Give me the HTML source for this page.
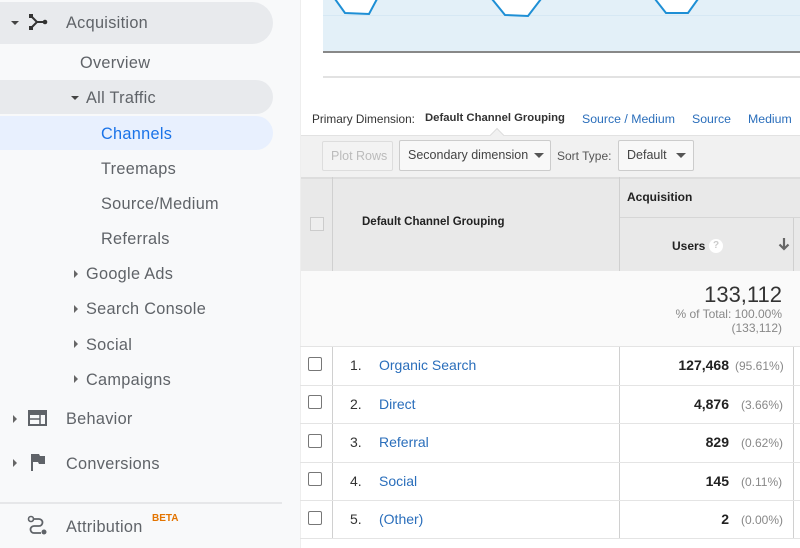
<!DOCTYPE html>
<html><head><meta charset="utf-8"><style>
*{margin:0;padding:0;box-sizing:border-box}
body{width:800px;height:548px;overflow:hidden;background:#fff;font-family:"Liberation Sans",Arial,sans-serif;position:relative}
.a{position:absolute;white-space:nowrap}
#side{position:absolute;left:0;top:0;width:300px;height:548px;background:#f8f9fa}
.nav{position:absolute;font-size:16.3px;color:#5f6368;line-height:20px;letter-spacing:0.3px}
.tri-d{position:absolute;width:0;height:0;border-left:4px solid transparent;border-right:4px solid transparent;border-top:4px solid #444}
.tri-r{position:absolute;width:0;height:0;border-top:4px solid transparent;border-bottom:4px solid transparent;border-left:4px solid #666}
.blue{color:#1a73e8}
.m{font-size:12px;color:#333}
.lnk{color:#2a6ebb}
.btn{position:absolute;border:1px solid #ccc;border-radius:2px;background:#f4f4f4;font-size:12.5px;color:#444;padding-left:8px;line-height:29px}
.cb{position:absolute;width:14px;height:14px;border:1.5px solid #777;border-radius:2px;background:#fff}
.row{position:absolute;left:300px;width:500px;border-top:1px solid #e4e4e4;font-size:14px}
</style></head><body>
<div id="side">
 <div class="a" style="left:0;top:2px;width:273px;height:42px;background:#e8eaed;border-radius:0 21px 21px 0"></div>
 <div class="a" style="left:0;top:80px;width:273px;height:34px;background:#e8eaed;border-radius:0 17px 17px 0"></div>
 <div class="a" style="left:0;top:116px;width:273px;height:34px;background:#e8f0fe;border-radius:0 17px 17px 0"></div>
 <div class="tri-d" style="left:11px;top:21px"></div>
 <svg class="a" style="left:28px;top:13px" width="20" height="18" viewBox="0 0 20 18"><path d="M3 3 L9 9 L3 15 M9 9 H17" stroke="#333" stroke-width="2" fill="none"/><rect x="1" y="1" width="4" height="4" fill="#333"/><rect x="1" y="13" width="4" height="4" fill="#333"/><circle cx="17" cy="9" r="2.3" fill="#333"/></svg>
 <div class="nav" style="left:66px;top:13px">Acquisition</div>
 <div class="nav" style="left:80px;top:53px">Overview</div>
 <div class="tri-d" style="left:71px;top:96px"></div>
 <div class="nav" style="left:86px;top:88px">All Traffic</div>
 <div class="nav blue" style="left:101px;top:124px">Channels</div>
 <div class="nav" style="left:101px;top:159px">Treemaps</div>
 <div class="nav" style="left:101px;top:194px">Source/Medium</div>
 <div class="nav" style="left:101px;top:229px">Referrals</div>
 <div class="tri-r" style="left:74px;top:270px"></div><div class="nav" style="left:86px;top:264px">Google Ads</div>
 <div class="tri-r" style="left:74px;top:305px"></div><div class="nav" style="left:86px;top:299px">Search Console</div>
 <div class="tri-r" style="left:74px;top:340px"></div><div class="nav" style="left:86px;top:335px">Social</div>
 <div class="tri-r" style="left:74px;top:375px"></div><div class="nav" style="left:86px;top:370px">Campaigns</div>
 <div class="tri-r" style="left:13px;top:415px"></div>
 <svg class="a" style="left:28px;top:410px" width="19" height="16"><rect x="1" y="1" width="17" height="14" fill="none" stroke="#5f6368" stroke-width="2"/><rect x="1" y="1" width="17" height="4" fill="#5f6368"/><line x1="2" y1="9" x2="12" y2="9" stroke="#5f6368" stroke-width="1.5"/><line x1="12" y1="5" x2="12" y2="15" stroke="#5f6368" stroke-width="1.5"/></svg>
 <div class="nav" style="left:66px;top:409px">Behavior</div>
 <div class="tri-r" style="left:13px;top:459px"></div>
 <svg class="a" style="left:30px;top:453px" width="16" height="18"><rect x="1" y="1" width="2" height="17" fill="#5f6368"/><path d="M3 1 H9 L10 3 H15 V11 H9 L8 9 H3Z" fill="#5f6368"/></svg>
 <div class="nav" style="left:66px;top:454px">Conversions</div>
 <div class="a" style="left:0;top:502px;width:282px;height:2px;background:#e6e7e9"></div>
 <svg class="a" style="left:27px;top:515px" width="22" height="22"><circle cx="4" cy="4" r="2.5" fill="none" stroke="#5f6368" stroke-width="1.6"/><circle cx="17" cy="17" r="2.5" fill="#5f6368"/><path d="M6.5 4 H12 A3.5 3.5 0 0 1 12 11 H7 A3.5 3.5 0 0 0 7 18 H14" fill="none" stroke="#5f6368" stroke-width="1.8"/></svg>
 <div class="nav" style="left:66px;top:517px">Attribution</div>
 <div class="a" style="left:152px;top:513px;font-size:10px;font-weight:bold;color:#e37400">BETA</div>
</div>
<div class="a" style="left:300px;top:0;width:1px;height:548px;background:#eee"></div>
<div class="a" style="left:323px;top:0;width:477px;height:53px;background:#e3f0f8;border-bottom:2px solid #888"></div>
<div class="a" style="left:323px;top:15px;width:477px;height:1px;background:#d6e8f4"></div>
<svg class="a" style="left:323px;top:0" width="477" height="20"><g fill="#fff" stroke="#1e8fd5" stroke-width="2"><path d="M12 -1 L22 13 L46 14 L54 -1Z"/><path d="M169 -1 L182 15 L205 16 L218 -1Z"/><path d="M332 -1 L343 13 L365 13 L375 -1Z"/></g></svg>
<div class="a" style="left:323px;top:76px;width:477px;height:2px;background:#e2e2e2"></div>
<div class="a m" style="left:312px;top:112px;font-size:11.8px">Primary Dimension:</div>
<div class="a m" style="left:425px;top:112px;font-weight:bold;font-size:11.3px">Default Channel Grouping</div>
<div class="a m lnk" style="left:582px;top:112px;font-size:12.3px">Source / Medium</div>
<div class="a m lnk" style="left:692px;top:112px;font-size:12.3px">Source</div>
<div class="a m lnk" style="left:748px;top:112px;font-size:12.3px">Medium</div>
<div class="a" style="left:301px;top:135px;width:499px;height:42px;background:#f1f1f1;border-top:1px solid #e2e2e2"></div>
<div class="a" style="left:492px;top:130px;width:10px;height:10px;background:#f1f1f1;border-left:1px solid #ddd;border-top:1px solid #ddd;transform:rotate(45deg)"></div>
<div class="btn" style="left:322px;top:141px;width:71px;height:30px;color:#bbb;background:#f3f3f3;border-color:#ddd">Plot Rows</div>
<div class="btn" style="left:399px;top:140px;width:152px;height:31px;background:#f8f8f8">Secondary dimension</div>
<div class="tri-d" style="left:534px;top:153px;border-top-color:#555;border-left-width:5px;border-right-width:5px;border-top-width:5px"></div>
<div class="a m" style="left:557px;top:149px;color:#555">Sort Type:</div>
<div class="btn" style="left:618px;top:140px;width:76px;height:31px;background:#f8f8f8">Default</div>
<div class="tri-d" style="left:676px;top:153px;border-top-color:#555;border-left-width:5px;border-right-width:5px;border-top-width:5px"></div>
<div class="a" style="left:301px;top:177px;width:499px;height:94px;background:#e9e9e9;border-top:2px solid #ddd"></div>
<div class="a" style="left:619px;top:217px;width:181px;height:1px;background:#d6d6d6"></div>
<div class="a" style="left:332px;top:177px;width:1px;height:362px;background:#d0d0d0"></div>
<div class="a" style="left:619px;top:177px;width:1px;height:362px;background:#d0d0d0"></div>
<div class="a" style="left:793px;top:218px;width:1px;height:321px;background:#d0d0d0"></div>
<div class="a" style="left:310px;top:217px;width:14px;height:14px;border:1px solid #ccc;background:#eee"></div>
<div class="a" style="left:362px;top:216px;font-size:11.5px;font-weight:bold;color:#222">Default Channel Grouping</div>
<div class="a" style="left:627px;top:190px;font-size:12px;font-weight:bold;color:#222">Acquisition</div>
<div class="a" style="left:672px;top:239px;font-size:12px;font-weight:bold;color:#222">Users</div>
<div class="a" style="left:709px;top:239px;width:14px;height:14px;border-radius:50%;background:#fff;color:#ccc;font-size:10px;font-weight:bold;text-align:center;line-height:14px">?</div>
<svg class="a" style="left:778px;top:237px" width="12" height="14"><path d="M6 1 V12 M1.5 7.5 L6 12 L10.5 7.5" stroke="#666" stroke-width="2.2" fill="none"/></svg>
<div class="a" style="left:301px;top:271px;width:499px;height:75px;background:#fafafa"></div>
<div class="a" style="left:600px;top:282px;width:182px;text-align:right;font-size:22px;color:#333">133,112</div>
<div class="a" style="left:600px;top:307px;width:182px;text-align:right;font-size:12px;color:#888;line-height:14px">% of Total: 100.00%<br>(133,112)</div>
<div class="row" style="top:346px;height:39px"></div>
<div class="row" style="top:385px;height:38px"></div>
<div class="row" style="top:423px;height:39px"></div>
<div class="row" style="top:462px;height:38px"></div>
<div class="row" style="top:500px;height:39px;border-bottom:1px solid #e4e4e4"></div>
<div class="cb" style="left:308px;top:357px"></div><div class="a" style="left:350px;top:357px;font-size:14px;color:#333">1.</div><div class="a lnk" style="left:379px;top:357px;font-size:14px">Organic Search</div>
<div class="a" style="left:600px;top:357px;width:129px;text-align:right;font-size:14px;font-weight:bold;color:#222">127,468</div><div class="a" style="left:735px;top:359px;font-size:12px;color:#888">(95.61%)</div>
<div class="cb" style="left:308px;top:395px"></div><div class="a" style="left:350px;top:396px;font-size:14px;color:#333">2.</div><div class="a lnk" style="left:379px;top:396px;font-size:14px">Direct</div>
<div class="a" style="left:600px;top:396px;width:129px;text-align:right;font-size:14px;font-weight:bold;color:#222">4,876</div><div class="a" style="left:741px;top:398px;font-size:12px;color:#888">(3.66%)</div>
<div class="cb" style="left:308px;top:434px"></div><div class="a" style="left:350px;top:434px;font-size:14px;color:#333">3.</div><div class="a lnk" style="left:379px;top:434px;font-size:14px">Referral</div>
<div class="a" style="left:600px;top:434px;width:129px;text-align:right;font-size:14px;font-weight:bold;color:#222">829</div><div class="a" style="left:741px;top:436px;font-size:12px;color:#888">(0.62%)</div>
<div class="cb" style="left:308px;top:472px"></div><div class="a" style="left:350px;top:473px;font-size:14px;color:#333">4.</div><div class="a lnk" style="left:379px;top:473px;font-size:14px">Social</div>
<div class="a" style="left:600px;top:473px;width:129px;text-align:right;font-size:14px;font-weight:bold;color:#222">145</div><div class="a" style="left:741px;top:475px;font-size:12px;color:#888">(0.11%)</div>
<div class="cb" style="left:308px;top:511px"></div><div class="a" style="left:350px;top:511px;font-size:14px;color:#333">5.</div><div class="a lnk" style="left:379px;top:511px;font-size:14px">(Other)</div>
<div class="a" style="left:600px;top:511px;width:129px;text-align:right;font-size:14px;font-weight:bold;color:#222">2</div><div class="a" style="left:741px;top:513px;font-size:12px;color:#888">(0.00%)</div>
</body></html>
